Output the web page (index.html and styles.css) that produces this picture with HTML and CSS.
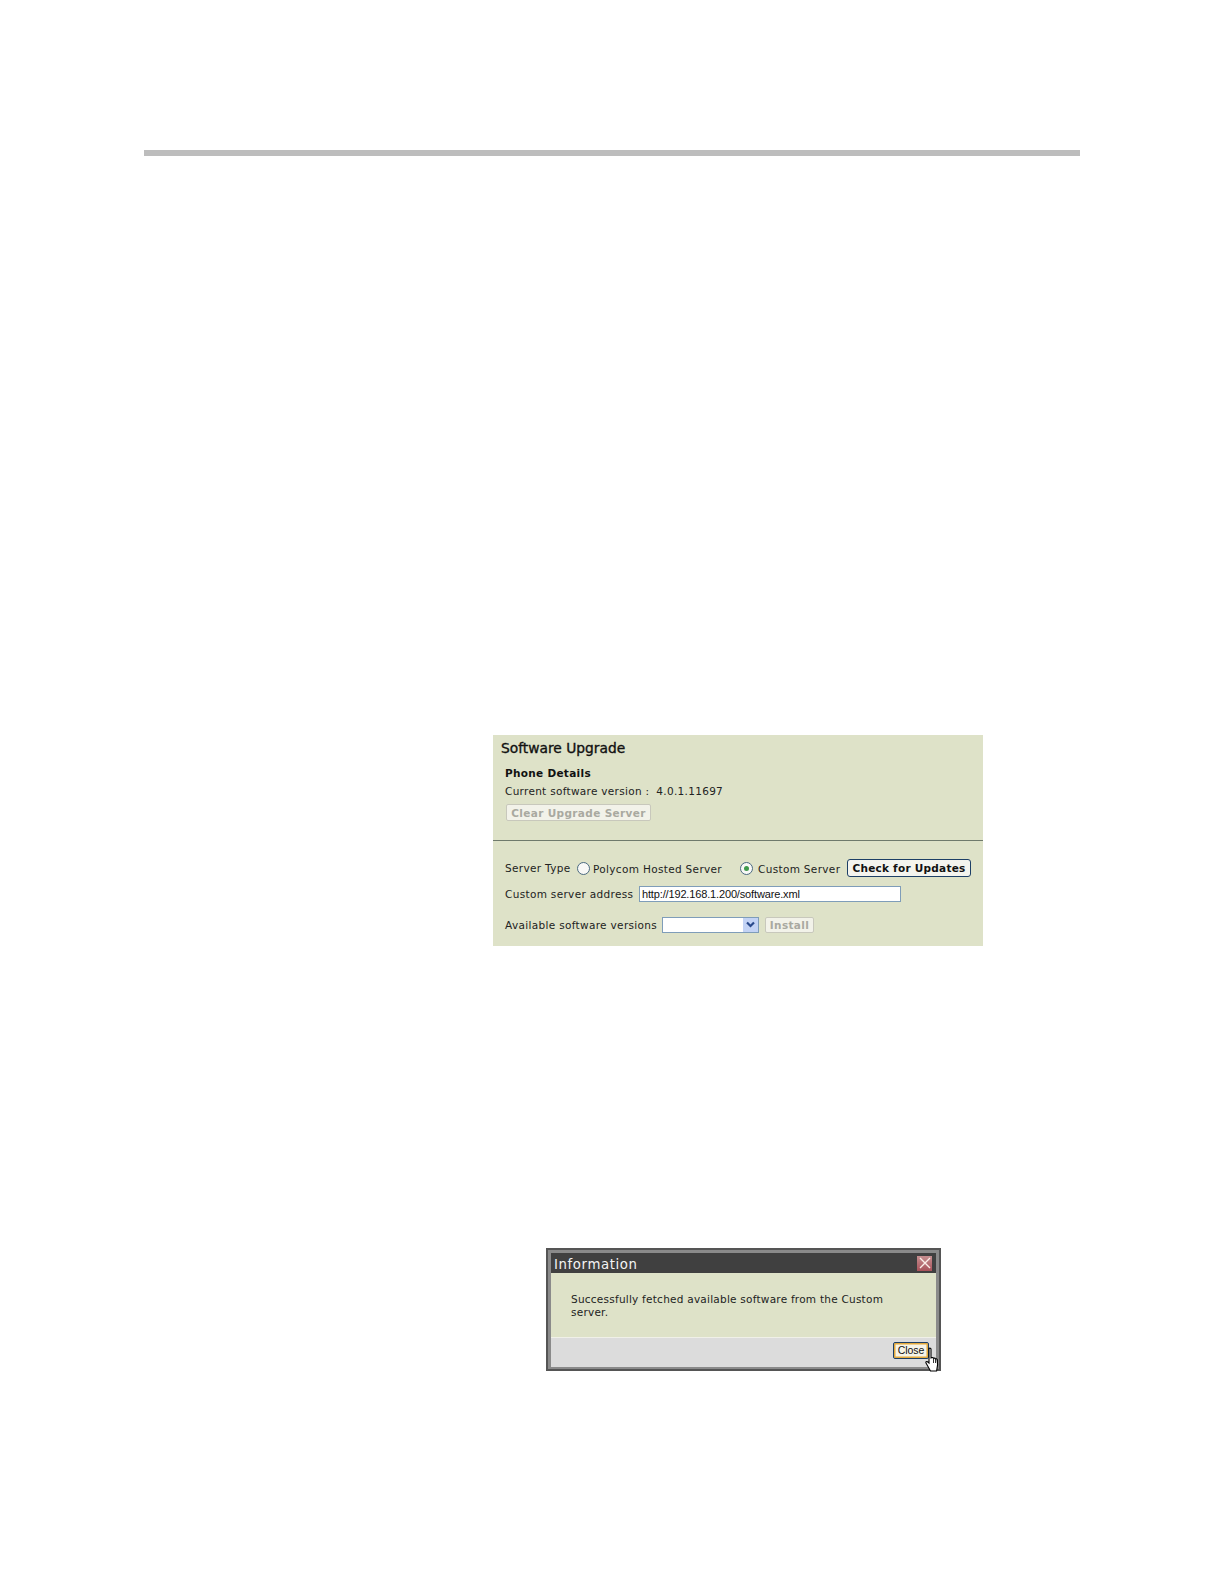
FILE: index.html
```html
<!DOCTYPE html>
<html lang="en">
<head>
<meta charset="utf-8">
<title>Software Upgrade</title>
<link rel="stylesheet" href="styles.css">
</head>
<body>
<div class="page">
  <div class="rule"></div>
  <section class="panel">
    <div class="top">
      <h1 class="title">Software Upgrade</h1>
      <h2 class="subtitle">Phone Details</h2>
      <div class="version"><span>Current software version :</span><span>4.0.1.11697</span></div>
      <button class="btn off clear">Clear Upgrade Server</button>
    </div>
    <div class="divider"></div>
    <div class="bottom">
      <div class="row server">
        <span class="lbl-type">Server Type</span>
        <span class="radio"></span>
        <span class="lbl-a">Polycom Hosted Server</span>
        <span class="radio on"><i></i></span>
        <span class="lbl-b">Custom Server</span>
        <button class="btn check">Check for Updates</button>
      </div>
      <div class="row address">
        <span class="lbl-addr">Custom server address</span>
        <span class="input">http://192.168.1.200/software.xml</span>
      </div>
      <div class="row avail">
        <span class="lbl-avail">Available software versions</span>
        <span class="select"><span class="arrow"><svg width="11" height="8" viewBox="0 0 11 8"><path d="M2 1.500 5.500 5 9 1.500" fill="none" stroke="#2a4a8c" stroke-width="2.200"/></svg></span></span>
        <button class="btn off install">Install</button>
      </div>
    </div>
  </section>
  <section class="dialog">
    <div class="dialog-head">
      <span class="dialog-title">Information</span>
      <span class="close"><svg width="14" height="14" viewBox="0 0 14 14"><path d="M2 2 12 12M12 2 2 12" stroke="#fbeee8" stroke-width="1.400"/></svg></span>
    </div>
    <div class="dialog-body">Successfully fetched available software from the Custom server.</div>
    <div class="dialog-foot"><button class="close-btn">Close</button></div>
    <svg class="hand" width="18" height="25" viewBox="0 0 18 25"><path d="M6 1.500c.8-.8 2-.2 2 .8V11l1-.4c.8-.2 1.300.1 1.500.7.800-.4 1.600-.2 1.800.5.800-.3 1.700.1 1.800.9l.5 5-1 6.300H7.500L3 16c-.6-1 .4-2 1.500-1.200L6 16z" fill="#fff" stroke="#000" stroke-width="1.100"/><path d="M10.500 11.500V16M12.500 12V16M14.500 12.500V16" fill="none" stroke="#000" stroke-width=".8"/></svg>
  </section>
</div>
</body>
</html>
```
FILE: styles.css
```css
html, body { margin: 0; padding: 0; background: #fff; }
body { width: 1224px; height: 1584px; overflow: hidden; font-family: "DejaVu Sans", sans-serif; font-size: 10.5px; color: #222; }
.page { display: flex; flex-direction: column; padding-top: 150px; }
.rule { width: 936px; height: 6px; margin-left: 144px; background: #bdbdbd; }
.panel { width: 490px; height: 211px; margin: 579px 0 0 493px; background: #dee2c8; display: flex; flex-direction: column; }
.top { height: 105px; flex: none; display: flex; flex-direction: column; align-items: flex-start; padding-left: 8px; box-sizing: border-box; }
.title { margin: 5px 0 0; font-size: 13.8px; line-height: 16px; font-weight: 400; color: #111; -webkit-text-stroke: .35px #111; }
.subtitle { margin: 10px 0 0 4px; font-size: 10.5px; line-height: 14px; font-weight: 700; color: #111; letter-spacing: .3px; }
.version { margin: 4px 0 0 4px; line-height: 14px; letter-spacing: .3px; display: flex; gap: 7px; }
.btn { font: 700 10.5px/14px "DejaVu Sans", sans-serif; letter-spacing: .35px; box-sizing: border-box; padding: 0; border-radius: 2px; }
.off { color: #a9a9a0; background: #f2f2e9; border: 1px solid #c8c8bc; }
.clear { width: 145px; height: 17px; margin: 6px 0 0 5px; }
.divider { height: 1px; flex: none; background: #6f7a6c; }
.bottom { display: flex; flex-direction: column; padding-left: 12px; }
.row { display: flex; align-items: center; letter-spacing: .33px; line-height: 14px; white-space: nowrap; }
.server { margin-top: 18px; height: 18px; }
.lbl-type { width: 66px; }
.radio { width: 13px; height: 13px; box-sizing: border-box; border: 1px solid #4b6a80; border-radius: 50%; background: #f8f8f6; display: flex; align-items: center; justify-content: center; margin: 1px 0 0 6px; }
.radio.on { margin-left: 19px; }
.radio i { width: 5px; height: 5px; border-radius: 50%; background: #3f9a4c; }
.lbl-a { margin: 1px 0 0 3px; width: 128px; }
.lbl-b { margin: 1px 0 0 5px; width: 83px; }
.check { width: 124px; height: 18px; margin-left: 6px; color: #111; background: #f4f4ee; border: 1px solid #1d3f66; border-radius: 3px; letter-spacing: .25px; }
.address { margin-top: 9px; height: 16px; }
.lbl-addr { width: 134px; }
.input { width: 262px; height: 16px; box-sizing: border-box; border: 1px solid #7f9db9; background: #fff; font: 11px/14px "Liberation Sans", sans-serif; color: #111; padding-left: 2px; letter-spacing: -.15px; }
.avail { margin-top: 15px; height: 16px; }
.lbl-avail { width: 157px; }
.select { width: 97px; height: 16px; box-sizing: border-box; border: 1px solid #7f9db9; background: #fff; display: flex; justify-content: flex-end; }
.arrow { width: 15px; background: #c3d3f5; display: flex; align-items: center; justify-content: center; }
.install { width: 49px; height: 16px; margin-left: 6px; }
.dialog { position: relative; width: 395px; height: 123px; margin: 302px 0 0 546px; box-sizing: border-box; border: 2px solid #555; background: #8a8a8a; padding: 3px 3px 2px; display: flex; flex-direction: column; }
.dialog-head { height: 20px; flex: none; background: #404040; color: #f4f4f4; font-size: 13.3px; line-height: 20px; letter-spacing: .6px; padding-left: 3px; display: flex; justify-content: space-between; align-items: center; }
.dialog-title { margin-top: 3px; }
.close { width: 15px; height: 15px; margin-right: 4px; background: linear-gradient(#c58f90, #a9525a); display: flex; align-items: center; justify-content: center; }
.dialog-body { height: 64px; flex: none; box-sizing: border-box; background: #dee2c8; padding: 20px 40px 0 20px; line-height: 13px; letter-spacing: .24px; }
.dialog-foot { flex: 1; box-sizing: border-box; border-top: 1px solid #f0f0e8; background: #dcdcdc; display: flex; justify-content: flex-end; align-items: flex-start; padding: 4px 7px 0 0; }
.close-btn { width: 36px; height: 17px; box-sizing: border-box; padding: 0; font: 10.5px/13px "Liberation Sans", sans-serif; letter-spacing: -.1px; color: #111; background: #f6f4e8; border: 1px solid #1d3f66; box-shadow: inset 0 0 0 1.5px #e3a93c; border-radius: 2px; }
.hand { position: absolute; left: 375px; top: 97px; }
```
